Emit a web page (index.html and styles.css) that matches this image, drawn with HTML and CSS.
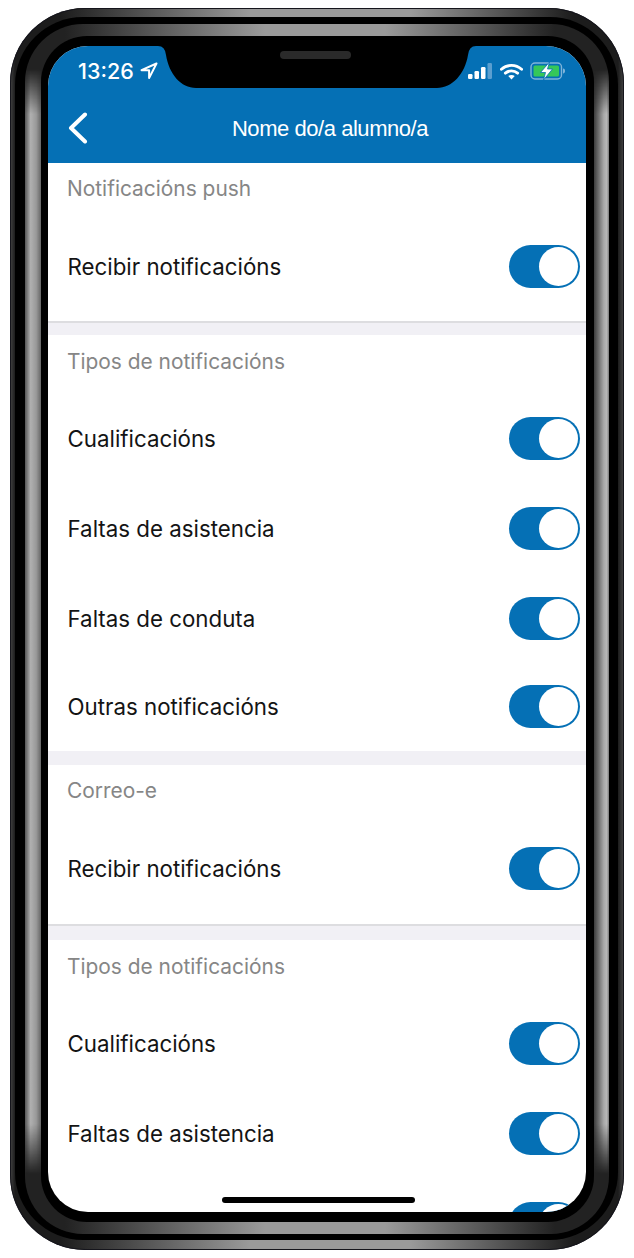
FILE: index.html
```html
<html>
  <head>
    <link rel="stylesheet" href="styles.css">
    <title>Nome do/a alumno/a</title>
  </head>
  <body>
    <div class="phone">
      <div class="bezelDark">
        <div class="bezelGrey">
          <div class="bezelInner">
            <div class="screen">
              <div class="appHeader">
                <div class="statusBar">
                  <div class="statusLeft">
                    <span class="clock">13:26</span>
                    <svg class="arrowIcon" viewBox="0 0 18 18"><path d="M16.500 1.500 1.500 8.200h7.600v7.900z" fill="none" stroke="#fff" stroke-width="2" stroke-linejoin="round"/></svg>
                  </div>
                  <div class="statusRight">
                    <svg class="signalIcon" viewBox="0 0 24 16">
                      <rect x="0" y="11" width="4.500" height="5" rx="1.200" fill="#fff"/>
                      <rect x="6.500" y="8" width="4.500" height="8" rx="1.200" fill="#fff"/>
                      <rect x="13" y="4" width="4.500" height="12" rx="1.200" fill="#fff"/>
                      <rect x="19.500" y="0" width="4.500" height="16" rx="1.200" fill="#5b9fd0"/>
                    </svg>
                    <svg class="wifiIcon" viewBox="0 0 24 17">
                      <path d="M1.500 6.200C7.500.8 16.500.8 22.500 6.200" fill="none" stroke="#fff" stroke-width="3" stroke-linecap="round"/>
                      <path d="M5.600 10.200C9.300 7 14.700 7 18.400 10.200" fill="none" stroke="#fff" stroke-width="3" stroke-linecap="round"/>
                      <path d="M8.600 13.200 12 16.800 15.400 13.200C13.400 11.700 10.600 11.700 8.600 13.200z" fill="#fff"/>
                    </svg>
                    <svg class="batteryIcon" viewBox="0 0 36 18">
                      <rect x="1" y="1" width="30.500" height="16" rx="4" fill="none" stroke="#7fb4da" stroke-width="1.400"/>
                      <rect x="3.500" y="3.500" width="25.500" height="11" rx="1.500" fill="#35c759"/>
                      <path d="M33 6.500c1.600.3 2 1.200 2 2.500s-.4 2.200-2 2.500z" fill="#7fb4da"/>
                      <path d="M19.500 0 10.500 10.500h5L13.500 18 22.500 7h-5z" fill="#fff" stroke="#0570b5" stroke-width=".8"/>
                    </svg>
                  </div>
                </div>
                <div class="navBar">
                  <svg class="backIcon" viewBox="0 0 20 32"><path d="M17 2.500 3 16l14 13.500" fill="none" stroke="#fff" stroke-width="4" stroke-linecap="round" stroke-linejoin="round"/></svg>
                  <div class="navTitle">Nome do/a alumno/a</div>
                </div>
              </div>

              <div class="section withLine">
                <div class="sectionLabel">Notificacións push</div>
                <div class="row"><span>Recibir notificacións</span><div class="toggle"><div class="knob"></div></div></div>
              </div>
              <div class="sectionGap"></div>

              <div class="section">
                <div class="sectionLabel lower">Tipos de notificacións</div>
                <div class="row"><span>Cualificacións</span><div class="toggle"><div class="knob"></div></div></div>
                <div class="row"><span>Faltas de asistencia</span><div class="toggle"><div class="knob"></div></div></div>
                <div class="row short"><span>Faltas de conduta</span><div class="toggle"><div class="knob"></div></div></div>
                <div class="row"><span>Outras notificacións</span><div class="toggle"><div class="knob"></div></div></div>
              </div>
              <div class="sectionGap tall"></div>

              <div class="section withLine email">
                <div class="sectionLabel">Correo-e</div>
                <div class="row"><span>Recibir notificacións</span><div class="toggle"><div class="knob"></div></div></div>
              </div>
              <div class="sectionGap tall"></div>

              <div class="section">
                <div class="sectionLabel lower">Tipos de notificacións</div>
                <div class="row"><span>Cualificacións</span><div class="toggle"><div class="knob"></div></div></div>
                <div class="row"><span>Faltas de asistencia</span><div class="toggle"><div class="knob"></div></div></div>
                <div class="row"><span></span><div class="toggle"><div class="knob"></div></div></div>
              </div>

              <svg class="notch" viewBox="0 0 538 42">
                <path d="M110 0Q117 0 118 9C121 28 133 42 148 42H389C404 42 417 28 420 9Q421 0 428 0Z" fill="#000"/>
              </svg>
              <div class="speaker"></div>
              <div class="homeBar"></div>
            </div>
          </div>
        </div>
      </div>
    </div>
  </body>
</html>
```

FILE: styles.css
```css
* {
  margin: 0;
  padding: 0;
  box-sizing: border-box;
}
html,
body {
  height: 1258px;
  overflow: hidden;
}
body {
  background: #fff;
  padding: 8px 10px;
  font-family: Inter, "Liberation Sans", sans-serif;
}
.phone {
  height: 1242px;
  padding: 9px 6px 10px 5px;
  border-radius: 75px;
  box-shadow: inset 0 0 0 1px #15151c;
  background: linear-gradient(
    to right,
    #444 0,
    #1c1c1c 5px,
    #1c1c1c 50px,
    #9a9a9a 240px,
    #9a9a9a 400px,
    #1c1c1c 564px,
    #1c1c1c 608px,
    #444 100%
  );
}
.bezelDark {
  height: 100%;
  padding: 7px 9px 6px 10px;
  border-radius: 68px;
  background: #000;
}
.bezelGrey {
  position: relative;
  height: 100%;
  padding: 12px 15px 12px 16px;
  border-radius: 58px;
  overflow: hidden;
  background: linear-gradient(
    to right,
    #222 0,
    #222 40px,
    #9a9a9a 240px,
    #9a9a9a 360px,
    #222 530px,
    #222 100%
  );
}
/* bright strips on the straight sides of the grey ring */
.bezelGrey::before,
.bezelGrey::after {
  content: "";
  position: absolute;
  top: 0;
  bottom: 0;
  width: 16px;
  -webkit-mask-image: linear-gradient(
    to bottom,
    transparent 45px,
    #000 90px,
    #000 1100px,
    transparent 1150px
  );
  mask-image: linear-gradient(
    to bottom,
    transparent 45px,
    #000 90px,
    #000 1100px,
    transparent 1150px
  );
}
.bezelGrey::before {
  left: 0;
  background: linear-gradient(to right, #555, #b0b0b0 35%, #999 70%, #666);
}
.bezelGrey::after {
  right: 0;
  width: 15px;
  background: linear-gradient(to right, #3c3c3c, #a8a8a8 65%, #b8b8b8 85%, #777);
}
.bezelInner {
  position: relative;
  z-index: 1;
  height: 100%;
  padding: 10px 8px 10px 7px;
  border-radius: 46px;
  background: #000;
}
.screen {
  position: relative;
  height: 100%;
  overflow: hidden;
  border-radius: 40px;
  background: #fff;
}
.appHeader {
  height: 117px;
  background: #0570b5;
}
.statusBar {
  display: flex;
  justify-content: space-between;
  align-items: center;
  height: 50px;
  padding: 0 20px 0 30px;
}
.statusLeft {
  display: flex;
  align-items: center;
  gap: 6px;
}
.clock {
  color: #fff;
  font-size: 21.500px;
  font-weight: 500;
}
.arrowIcon {
  width: 18px;
  height: 18px;
}
.statusRight {
  display: flex;
  align-items: center;
  gap: 7px;
}
.signalIcon {
  width: 24px;
  height: 16px;
  margin-right: 1px;
}
.wifiIcon {
  width: 23px;
  height: 17px;
}
.batteryIcon {
  width: 36px;
  height: 18px;
}
.navBar {
  position: relative;
  display: flex;
  justify-content: center;
  align-items: center;
  height: 66px;
}
.backIcon {
  position: absolute;
  left: 20px;
  top: 16px;
  width: 20px;
  height: 32px;
}
.navTitle {
  color: #fff;
  font-family: "Liberation Sans", sans-serif;
  font-size: 22px;
  letter-spacing: -0.45px;
  margin-left: 26px;
}
.section {
  padding: 0 6px 0 19.500px;
}
.section.withLine {
  height: 160px;
  border-bottom: 2px solid #dddde0;
}
.section.email {
  height: 161px;
}
.sectionLabel {
  display: flex;
  align-items: center;
  height: 58px;
  margin-left: -0.5px;
  padding-bottom: 8px;
  color: #868686;
  font-size: 20.900px;
}
.sectionLabel.lower {
  padding-bottom: 6px;
}
.row {
  display: flex;
  justify-content: space-between;
  align-items: center;
  height: 90px;
  color: #141414;
  font-size: 22.300px;
}
.row.short {
  height: 88px;
  padding-top: 2px;
}
.toggle {
  display: flex;
  justify-content: flex-end;
  align-items: center;
  width: 71px;
  height: 43px;
  padding: 2px;
  border-radius: 22px;
  background: #0570b5;
}
.knob {
  width: 39px;
  height: 39px;
  border-radius: 50%;
  background: #fff;
}
.sectionGap {
  height: 12px;
  background: #f1f0f5;
}
.sectionGap.tall {
  height: 14px;
}
.notch {
  position: absolute;
  left: 0;
  top: 0;
  width: 538px;
  height: 42px;
}
.speaker {
  position: absolute;
  left: 232px;
  top: 5px;
  width: 71px;
  height: 8px;
  border-radius: 4px;
  background: #2a2a2a;
}
.homeBar {
  position: absolute;
  left: 174px;
  top: 1151px;
  width: 193px;
  height: 6px;
  border-radius: 3px;
  background: #000;
}
```
